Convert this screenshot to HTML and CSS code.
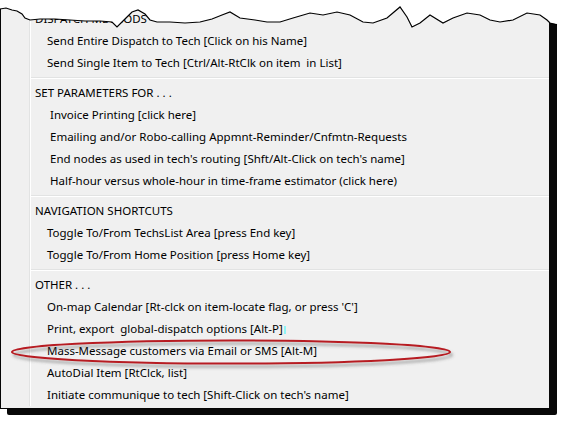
FILE: index.html
```html
<!DOCTYPE html>
<html>
<head>
<meta charset="utf-8">
<link rel="stylesheet" href="styles.css">
</head>
<body>
<div class="page">
  <div class="frame">
    <div class="menu">
      <div class="gutter"></div>
      <div class="list">
        <div class="hdr">DISPATCH METHODS</div>
        <div class="item">Send Entire Dispatch to Tech [Click on his Name]</div>
        <div class="item">Send Single Item to Tech [Ctrl/Alt-RtClk on item&nbsp; in List]</div>
        <div class="sep"></div>
        <div class="hdr">SET PARAMETERS FOR . . .</div>
        <div class="item deep">Invoice Printing [click here]</div>
        <div class="item deep">Emailing and/or Robo-calling Appmnt-Reminder/Cnfmtn-Requests</div>
        <div class="item deep">End nodes as used in tech's routing [Shft/Alt-Click on tech's name]</div>
        <div class="item deep">Half-hour versus whole-hour in time-frame estimator (click here)</div>
        <div class="sep"></div>
        <div class="hdr">NAVIGATION SHORTCUTS</div>
        <div class="item">Toggle To/From TechsList Area [press End key]</div>
        <div class="item">Toggle To/From Home Position [press Home key]</div>
        <div class="sep"></div>
        <div class="hdr">OTHER . . .</div>
        <div class="item">On-map Calendar [Rt-clck on item-locate flag, or press 'C']</div>
        <div class="item">Print, export&nbsp; global-dispatch options [Alt-P]<span class="caret"></span></div>
        <div class="item">Mass-Message customers via Email or SMS [Alt-M]</div>
        <div class="item">AutoDial Item [RtClck, list]</div>
        <div class="item">Initiate communique to tech [Shift-Click on tech's name]</div>
      </div>
    </div>
    <div class="rbar"></div>
  </div>
  <div class="bbar"></div>

  <svg class="torn" width="566" height="32" viewBox="0 0 566 32">
    <path class="torn-fill" d="M0,0 L566,0 L566,32 L557,32 L557,24 L550,23 L547,20 L540,15 L527,13 L513,20 L500,22 L490,20 L480,15 L467,13 L453,18 L443,23 L430,15 L420,23 L412,27 L407,17 L400,7 L387,18 L373,23 L363,22 L350,15 L337,12 L323,15 L310,13 L293,18 L280,22 L267,22 L255,20 L240,18 L230,12 L222,15 L212,19 L200,22 L185,23 L170,22 L157,22 L150,20 L145,14 L138,10 L132,12 L125,19 L117,27 L112,22 L100,21 L85,21 L70,20 L55,19 L40,19 L30,20 L25,18 L22,14 L17,11 L12,10 L6,8 L0,9 Z"/>
    <path class="torn-line" d="M0,9 L6,8 L12,10 L17,11 L22,14 L25,18 L30,20 L40,19 L55,19 L70,20 L85,21 L100,21 L112,22 L117,27 L125,19 L132,12 L138,10 L145,14 L150,20 L157,22 L170,22 L185,23 L200,22 L212,19 L222,15 L230,12 L240,18 L255,20 L267,22 L280,22 L293,18 L310,13 L323,15 L337,12 L350,15 L363,22 L373,23 L387,18 L400,7 L407,17 L412,27 L420,23 L430,15 L443,23 L453,18 L467,13 L480,15 L490,20 L500,22 L513,20 L527,13 L540,15 L547,20 L550,23 L557,25"/>
  </svg>

  <svg class="ring" width="566" height="424" viewBox="0 0 566 424">
    <defs>
      <filter id="sh" x="-10%" y="-50%" width="120%" height="200%">
        <feDropShadow dx="2" dy="3" stdDeviation="1.5" flood-color="#555" flood-opacity="0.55"/>
      </filter>
    </defs>
    <ellipse cx="231" cy="352" rx="219" ry="11.5" fill="none" stroke="#b71c22" stroke-width="2" filter="url(#sh)"/>
  </svg>
</div>
</body>
</html>
```

FILE: styles.css
```css
html, body {
  margin: 0;
  padding: 0;
  background: #ffffff;
}

.page {
  position: relative;
  width: 566px;
  height: 424px;
  overflow: hidden;
  background: #ffffff;
  font-family: "Noto Sans", "Open Sans", sans-serif;
  font-size: 11.5px;
  color: #000000;
}

.frame {
  display: flex;
  width: 557px;
  margin-top: 8px;
}

.menu {
  display: flex;
  width: 548px;
  flex: none;
  background: #f0f0f0;
  border-left: 1px solid #050505;
  border-bottom: 1px solid #050505;
  padding-bottom: 2px;
}

.rbar {
  width: 8px;
  min-width: 8px;
  flex: none;
  background-color: #080808;
}

.bbar {
  margin-left: 7px;
  width: 550px;
  height: 6px;
  background-color: #080808;
  border-radius: 0 0 2px 2px;
}

.gutter {
  width: 28px;
  flex: none;
  border-right: 1px solid #e2e3e3;
  box-shadow: 1px 0 0 #ffffff;
  margin-right: 1px;
}

.list {
  flex: 1;
  display: flex;
  flex-direction: column;
}

.hdr {
  height: 22px;
  line-height: 22px;
  padding-left: 4px;
  white-space: nowrap;
}

.item {
  height: 22px;
  line-height: 22px;
  padding-left: 16px;
  white-space: nowrap;
}

.item.deep {
  padding-left: 19px;
}

.sep {
  height: 8px;
  display: flex;
  flex-direction: column;
  justify-content: center;
}

.sep::before {
  content: "";
  display: block;
  height: 1px;
  background: #e2e3e3;
  border-bottom: 1px solid #ffffff;
}

.caret {
  display: inline-block;
  width: 2px;
  height: 8px;
  margin-left: 1px;
  background: #8ff5f5;
  vertical-align: -1px;
}

.torn {
  position: absolute;
  left: 0;
  top: 0;
}

.torn-fill {
  fill: #ffffff;
}

.torn-line {
  fill: none;
  stroke: #000000;
  stroke-width: 1.2;
}

.ring {
  position: absolute;
  left: 0;
  top: 0;
  pointer-events: none;
}
```
